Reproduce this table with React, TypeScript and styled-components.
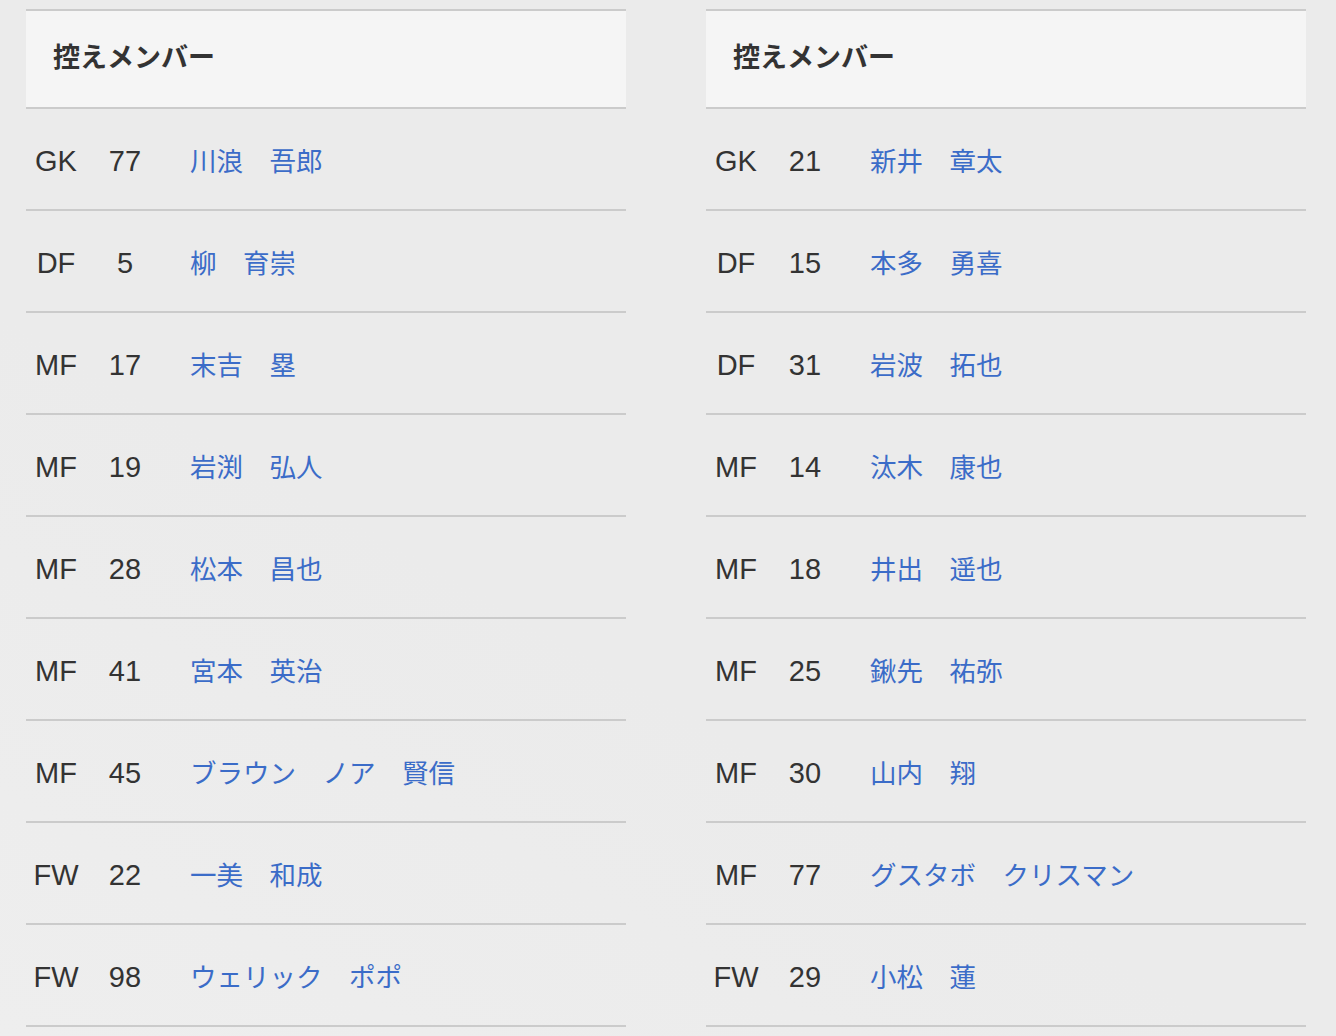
import React from 'react';
import styled, { createGlobalStyle } from 'styled-components';

const GlobalStyle = createGlobalStyle`
  html, body {
    margin: 0;
    padding: 0;
    background: #ebebeb;
  }
  body {
    font-family: "Liberation Sans", "Noto Sans CJK JP", sans-serif;
    color: #333;
  }
`;

type Player = [string, string, string];

const LEFT: Player[] = [
  ['GK', '77', '川浪　吾郎'],
  ['DF', '5', '柳　育崇'],
  ['MF', '17', '末吉　塁'],
  ['MF', '19', '岩渕　弘人'],
  ['MF', '28', '松本　昌也'],
  ['MF', '41', '宮本　英治'],
  ['MF', '45', 'ブラウン　ノア　賢信'],
  ['FW', '22', '一美　和成'],
  ['FW', '98', 'ウェリック　ポポ']
];

const RIGHT: Player[] = [
  ['GK', '21', '新井　章太'],
  ['DF', '15', '本多　勇喜'],
  ['DF', '31', '岩波　拓也'],
  ['MF', '14', '汰木　康也'],
  ['MF', '18', '井出　遥也'],
  ['MF', '25', '鍬先　祐弥'],
  ['MF', '30', '山内　翔'],
  ['MF', '77', 'グスタボ　クリスマン'],
  ['FW', '29', '小松　蓮']
];

const ScPage = styled.div`
  display: grid;
  grid-template-columns: 600px 600px;
  gap: 80px;
  padding: 9px 26px 0;
  background: linear-gradient(30deg, #eeeeee 0%, #ebebeb 40%, #ebebeb 100%);
  min-height: 1036px;
  box-sizing: border-box;
`;

const ScTable = styled.div`
  display: flex;
  flex-direction: column;
`;

const ScHead = styled.div`
  height: 100px;
  display: flex;
  align-items: center;
  padding: 0 0 7px 27px;
  box-sizing: border-box;
  background: #f5f5f5;
  border-top: 2px solid #cbcbcb;
  border-bottom: 2px solid #cbcbcb;
  font-family: "Noto Sans CJK JP", sans-serif;
  font-weight: 700;
  font-size: 27px;
  color: #333;
`;

const ScRow = styled.div`
  display: grid;
  grid-template-columns: 60px 78px 1fr;
  align-items: baseline;
  align-content: center;
  height: 102px;
  box-sizing: border-box;
  border-bottom: 2px solid #cbcbcb;
  padding-top: 2px;
  font-size: 29px;
  line-height: 40px;
`;

const ScCell = styled.div`
  text-align: center;
  color: #333;
`;

const ScName = styled.a`
  padding-left: 26px;
  color: #3b6cc8;
  text-decoration: none;
  font-family: "Noto Sans CJK JP", sans-serif;
  font-size: 26.5px;
  white-space: nowrap;
`;

function SubTable({ players }: { players: Player[] }): JSX.Element {
  return <ScTable>
    <ScHead>控えメンバー</ScHead>
    {players.map(([pos, num, name]) => (
      <ScRow key={pos + num}>
        <ScCell>{pos}</ScCell>
        <ScCell>{num}</ScCell>
        <ScName href="#">{name}</ScName>
      </ScRow>
    ))}
  </ScTable>;
}

export default function App(): JSX.Element {
  return <>
    <GlobalStyle />
    <ScPage>
      <SubTable players={LEFT} />
      <SubTable players={RIGHT} />
    </ScPage>
  </>;
}
